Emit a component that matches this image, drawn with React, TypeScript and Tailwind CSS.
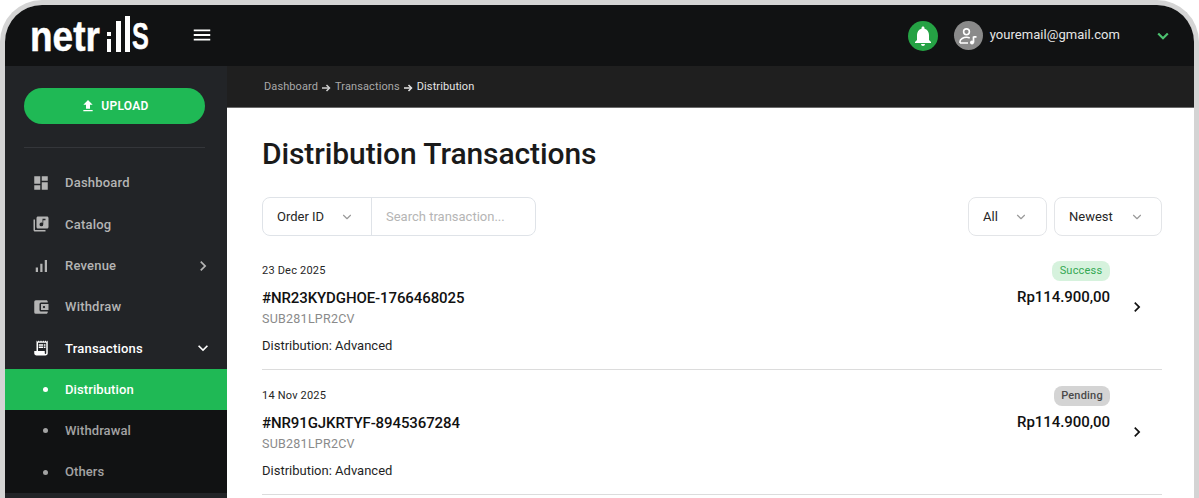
import React from "react";
import { MdDashboard, MdLibraryMusic, MdSignalCellularAlt, MdAccountBalanceWallet, MdReceiptLong, MdFileUpload, MdNotifications, MdChevronRight, MdExpandMore, MdMenu } from "react-icons/md";
import { LuChevronDown } from "react-icons/lu";

const font = "font-['Roboto',sans-serif]";

function Arrow({ color }: { color: string }) {
  return (
    <svg width="9" height="8" viewBox="0 0 9 8" className="mx-[4px]" fill="none" stroke={color}>
      <path d="M0 4h7" strokeWidth="1.5" />
      <path d="M4.5 1l3 3-3 3" strokeWidth="1.5" />
    </svg>
  );
}

function NavItem({ icon, label, active, trailing }: { icon: React.ReactNode; label: string; active?: boolean; trailing?: React.ReactNode }) {
  return (
    <div className={`h-[41.3px] pl-[27px] pr-[14px] flex items-center text-[13px] font-medium tracking-[0.2px] ${active ? "text-white" : "text-[#b4b4b4]"}`}>
      <span className="w-[18px] flex justify-center text-[18px]">{icon}</span>
      <span className="ml-[15px] flex-1">{label}</span>
      {trailing}
    </div>
  );
}

function SubItem({ label, active }: { label: string; active?: boolean }) {
  return (
    <div className={`h-[41.3px] pl-[38px] flex items-center text-[13px] font-medium tracking-[0.1px] ${active ? "bg-[#1fb955] text-white" : "text-[#a3a3a3]"}`}>
      <span className={`w-[5px] h-[5px] rounded-full ${active ? "bg-white" : "bg-[#a3a3a3]"}`} />
      <span className="ml-[17px]">{label}</span>
    </div>
  );
}

function Select({ label, w, chevX }: { label: string; w: string; chevX: string }) {
  return (
    <div className={`${w} h-[39px] rounded-[8px] border border-[#e3e5e8] flex items-center pl-[14px] text-[13px] text-[#262626]`}>
      <span className={chevX}>{label}</span>
      <LuChevronDown className="text-[#9a9a9a] text-[14px]" />
    </div>
  );
}

function Row({ date, id, status, statusClass, badgeW }: { date: string; id: string; status: string; statusClass: string; badgeW: string }) {
  return (
    <div className="h-[125px] border-b border-[#dcdcdc] flex relative">
      <div className="flex-1 pt-[18px]">
        <div className="text-[11px] leading-[16px] text-[#262626] tracking-[0.2px]">{date}</div>
        <div className="mt-[9px] text-[15px] leading-[20px] font-medium text-[#111] tracking-[-0.1px]">{id}</div>
        <div className="mt-[2px] text-[12.5px] leading-[18px] text-[#8a8a8a] tracking-[0.25px]">SUB281LPR2CV</div>
        <div className="mt-[9px] text-[13px] leading-[18px] text-[#1f1f1f]">Distribution: Advanced</div>
      </div>
      <div className="flex flex-col items-end pt-[16px] mr-[52px]">
        <span className={`${badgeW} h-[20px] rounded-[8px] flex items-center justify-center text-[11px] tracking-[0.2px] ${statusClass}`}>{status}</span>
        <div className="mt-[6px] text-[15px] leading-[20px] font-medium text-[#111] tracking-[-0.05px]">Rp114.900,00</div>
      </div>
      <MdChevronRight className="absolute right-[15px] top-[52px] text-[20px] text-[#111]" />
    </div>
  );
}

export default function App() {
  return (
    <div className={`${font} w-[1199px] h-[498px] bg-white overflow-hidden`}>
      <div className="h-[498px] border-[5px] border-b-0 border-[#d4d4d4] rounded-t-[42px] overflow-hidden flex flex-col bg-white">
        <header className="h-[61px] shrink-0 bg-[#111213] flex items-center">
          <div className="w-[222px] h-full flex items-center pl-[25px]">
            <div className="flex items-end h-[37px] mt-[-5px] font-['Liberation_Sans',sans-serif] text-white font-bold leading-[30px] [-webkit-text-stroke:0.5px_white]">
              <span className="block w-[77px] text-[42px] scale-x-[0.88] origin-left">netr</span>
              <span className="flex flex-col items-center gap-[3px]"><i className="block w-[4px] h-[4px] bg-white" /><i className="block w-[4px] h-[13px] bg-white" /></span>
              <span className="ml-[5px] block w-[4.5px] h-[31px] bg-white" />
              <span className="ml-[4.5px] block w-[4.5px] h-[36px] bg-white" />
              <span className="ml-[2px] block w-[20px] text-[36px] scale-x-[0.7] origin-left">S</span>
            </div>
            <MdMenu className="text-white text-[22px] ml-[39px] mt-[-1px]" />
          </div>
          <div className="flex-1 flex items-center justify-end">
            <span className="w-[30px] h-[30px] rounded-full bg-[#25a244] flex items-center justify-center"><MdNotifications className="text-white text-[24px]" /></span>
            <span className="ml-[16px] w-[29px] h-[29px] rounded-full bg-[#8a8a8a] flex items-center justify-center">
              <svg width="20" height="20" viewBox="0 0 20 20" fill="none" stroke="white" strokeWidth="1.6">
                <circle cx="8.5" cy="5.8" r="2.9" />
                <path d="M2 17v-1.6C2 13 5.500 11.300 8.500 11.300c1.200 0 2.300.2 3.200.6M2 17h8" />
                <path d="M15.500 10.500v6" strokeWidth="1.7" />
                <path d="M15.500 10.800h3" strokeWidth="1.7" />
                <circle cx="14" cy="16.500" r="2" fill="white" stroke="none" />
              </svg>
            </span>
            <span className="ml-[7px] mt-[-2px] text-[13px] text-[#e6e6e6] tracking-[0.05px]">youremail@gmail.com</span>
            <svg width="12" height="8" viewBox="0 0 12 8" className="ml-[37px] mr-[25px]" fill="none" stroke="#4cc06f" strokeWidth="2.2"><path d="M1.200 1.500L6 6.200l4.800-4.700" /></svg>
          </div>
        </header>
        <div className="flex-1 min-h-0 flex">
          <aside className="w-[222px] shrink-0 bg-[#222427] flex flex-col">
            <div className="pt-[22px] pl-[19px] pr-[22px]">
              <div className="h-[36px] rounded-full bg-[#1fb955] flex items-center justify-center text-white text-[12px] font-semibold tracking-[0.3px]">
                <MdFileUpload className="text-[16px] mr-[5px]" />UPLOAD
              </div>
              <div className="mt-[23px] h-px bg-[#34363a]" />
            </div>
            <nav className="mt-[14.5px]">
              <NavItem icon={<MdDashboard />} label="Dashboard" />
              <NavItem icon={<MdLibraryMusic />} label="Catalog" />
              <NavItem icon={<MdSignalCellularAlt />} label="Revenue" trailing={<MdChevronRight className="text-[20px] text-[#b4b4b4]" />} />
              <NavItem icon={<MdAccountBalanceWallet />} label="Withdraw" />
              <NavItem active icon={<MdReceiptLong />} label="Transactions" trailing={<MdExpandMore className="text-[20px] text-white" />} />
              <div className="bg-[#111213]">
                <SubItem active label="Distribution" />
                <SubItem label="Withdrawal" />
                <SubItem label="Others" />
              </div>
            </nav>
          </aside>
          <main className="flex-1 min-w-0 flex flex-col">
            <div className="h-[42px] shrink-0 bg-[#1f1f1f] border-b border-[#6b6b6b] pl-[37px] pt-[2px] flex items-center text-[11px] tracking-[0.1px] text-[#a8a8a8]">
              Dashboard<Arrow color="#cfcfcf" />Transactions<Arrow color="#e5e5e5" /><span className="text-[#e5e5e5]">Distribution</span>
            </div>
            <div className="pl-[35px] pr-[32px]">
              <h1 className="mt-[26px] text-[30px] leading-[40px] font-medium text-[#1a1a1a] tracking-[-0.1px]">Distribution Transactions</h1>
              <div className="mt-[23px] flex items-start h-[40px]">
                <div className="w-[274px] h-[39px] rounded-[8px] border border-[#dfe3e8] flex items-center text-[13px]">
                  <div className="w-[109px] h-full border-r border-[#dfe3e8] flex items-center pl-[14px] text-[#262626]">
                    <span className="w-[63px]">Order ID</span>
                    <LuChevronDown className="text-[#9a9a9a] text-[14px]" />
                  </div>
                  <span className="pl-[14px] text-[#b5b5b5]">Search transaction...</span>
                </div>
                <div className="ml-auto flex gap-[7px]">
                  <Select label="All" w="w-[79px]" chevX="w-[31px]" />
                  <Select label="Newest" w="w-[108px]" chevX="w-[61px]" />
                </div>
              </div>
              <div className="mt-[8px]">
                <Row date="23 Dec 2025" id="#NR23KYDGHOE-1766468025" status="Success" statusClass="bg-[#d6f2dd] text-[#34a853]" badgeW="w-[58px]" />
                <Row date="14 Nov 2025" id="#NR91GJKRTYF-8945367284" status="Pending" statusClass="bg-[#d4d4d4] text-[#4a4a4a] font-medium" badgeW="w-[56px]" />
              </div>
            </div>
          </main>
        </div>
      </div>
    </div>
  );
}
